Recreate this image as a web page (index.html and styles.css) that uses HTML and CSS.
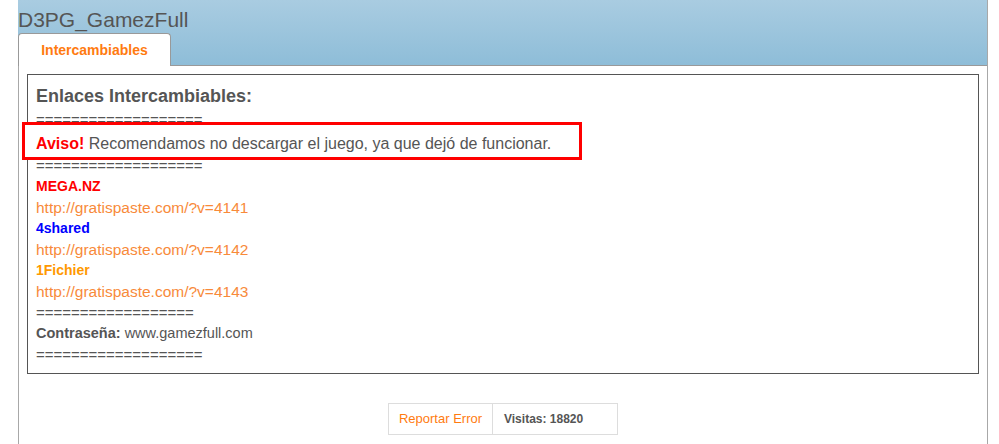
FILE: index.html
```html
<!DOCTYPE html>
<html lang="es">
<head>
<meta charset="UTF-8">
<title>D3PG_GamezFull</title>
<link rel="stylesheet" href="styles.css">
</head>
<body>
    <div class="panel">
        <div class="header">
            <div class="title">D3PG_GamezFull</div>
            <div class="tabs">
                <a class="tab active" href="#">Intercambiables</a>
            </div>
        </div>
        <div class="content">
            <div class="box">
                <h2>Enlaces Intercambiables:</h2>
                <div class="line">===================</div>
                <div class="notice"><b>Aviso!</b> Recomendamos no descargar el juego, ya que dejó de funcionar.</div>
                <div class="line">===================</div>
                <div class="line host mega">MEGA.NZ</div>
                <div class="line"><a href="#">http://gratispaste.com/?v=4141</a></div>
                <div class="line host shared">4shared</div>
                <div class="line"><a href="#">http://gratispaste.com/?v=4142</a></div>
                <div class="line host fichier">1Fichier</div>
                <div class="line"><a href="#">http://gratispaste.com/?v=4143</a></div>
                <div class="line">==================</div>
                <div class="line pass"><b>Contraseña:</b> www.gamezfull.com</div>
                <div class="line">===================</div>
            </div>
            <div class="footer">
                <a href="#" class="report">Reportar Error</a>
                <span class="visits">Visitas: 18820</span>
            </div>
        </div>
    </div>
</body>
</html>
```

FILE: styles.css
```css
body {
    margin: 0;
    background: #fff;
    font-family: "Liberation Sans", Arial, sans-serif;
    color: #555;
}

.panel {
    margin-left: 18px;
    width: 968px;
    border-left: 1px solid #a8a8a8;
    border-right: 1px solid #a8a8a8;
    min-height: 444px;
}

.header {
    height: 65px;
    background: linear-gradient(to bottom, #a9cce1, #8ebdd8);
    border-bottom: 1px solid #999;
    display: flex;
    flex-direction: column;
    justify-content: space-between;
    margin-left: -1px;
}

.title {
    font-size: 21px;
    color: #555;
    padding-top: 9px;
    line-height: 22px;
}

.tabs {
    display: flex;
    margin-bottom: -1px;
}

.tab {
    display: block;
    width: 151px;
    height: 32px;
    line-height: 33px;
    background: #fff;
    border: 1px solid #999;
    border-bottom: none;
    border-radius: 4px 4px 0 0;
    text-align: center;
    color: #ff7b10;
    font-weight: bold;
    font-size: 14px;
    text-decoration: none;
}

.content {
    padding: 8px 8px 0 8px;
}

.box {
    border: 1px solid #555;
    padding: 10px 8px 6px 8px;
    height: 282px;
}

.box h2 {
    margin: 0 0 2px 0;
    font-size: 18px;
    color: #555;
    line-height: 22px;
}

.line {
    font-size: 15px;
    line-height: 21px;
}

.notice {
    margin: -8px 0 -5px -14px;
    width: 543px;
    border: 3px solid #f00;
    padding: 6px 0 0 11px;
    font-size: 16px;
    line-height: 26px;
    color: #555;
    position: relative;
    background: #fff;
}

.notice b {
    color: #f00;
}

.host {
    font-weight: bold;
    font-size: 14px;
}

.mega {
    color: #f00;
}

.shared {
    color: #00f;
}

.fichier {
    color: #ff9900;
}

.line a {
    color: #f88a3a;
    text-decoration: none;
    font-size: 15.5px;
}

.pass {
    font-size: 14.5px;
}

.footer {
    display: flex;
    justify-content: center;
    margin-top: 29px;
    font-size: 12px;
}

.footer .report,
.footer .visits {
    display: block;
    border: 1px solid #ddd;
    height: 30px;
    line-height: 30px;
}

.footer .report {
    width: 103px;
    text-align: center;
    font-size: 13px;
    color: #ff7b10;
    text-decoration: none;
}

.footer .visits {
    border-left: none;
    font-weight: bold;
    color: #555;
    width: 113px;
    padding-left: 11px;
}
```
